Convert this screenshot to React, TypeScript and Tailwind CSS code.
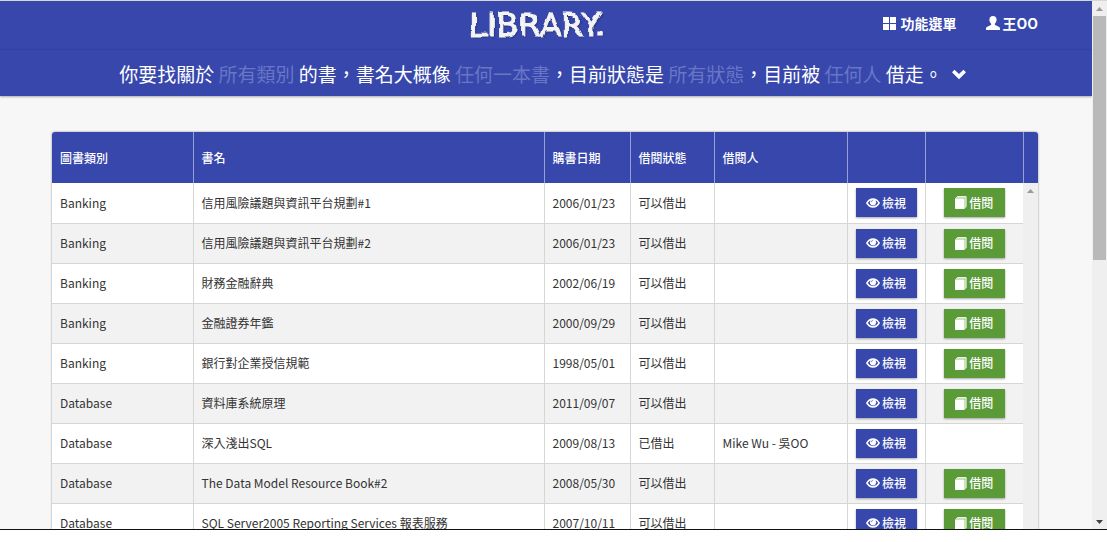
import type { ReactNode } from "react";

type Book = {
  category: string;
  title: string;
  date: string;
  status: string;
  borrower?: string;
};

const books: Book[] = [
  { category: "Banking", title: "信用風險議題與資訊平台規劃#1", date: "2006/01/23", status: "可以借出" },
  { category: "Banking", title: "信用風險議題與資訊平台規劃#2", date: "2006/01/23", status: "可以借出" },
  { category: "Banking", title: "財務金融辭典", date: "2002/06/19", status: "可以借出" },
  { category: "Banking", title: "金融證券年鑑", date: "2000/09/29", status: "可以借出" },
  { category: "Banking", title: "銀行對企業授信規範", date: "1998/05/01", status: "可以借出" },
  { category: "Database", title: "資料庫系統原理", date: "2011/09/07", status: "可以借出" },
  { category: "Database", title: "深入淺出SQL", date: "2009/08/13", status: "已借出", borrower: "Mike Wu - 吳OO" },
  { category: "Database", title: "The Data Model Resource Book#2", date: "2008/05/30", status: "可以借出" },
  { category: "Database", title: "SQL Server2005 Reporting Services 報表服務", date: "2007/10/11", status: "可以借出" },
];

const headings = ["圖書類別", "書名", "購書日期", "借閱狀態", "借閱人", "", "", ""];

function ChalkFilter() {
  return (
    <svg width="0" height="0" className="absolute" aria-hidden="true">
      <filter id="chalk" x="-5%" y="-10%" width="110%" height="120%">
        <feTurbulence type="fractalNoise" baseFrequency="0.07" numOctaves="2" seed="7" result="noise" />
        <feDisplacementMap in="SourceGraphic" in2="noise" scale="5" xChannelSelector="R" yChannelSelector="G" />
      </filter>
    </svg>
  );
}

function GridIcon() {
  return (
    <svg viewBox="0 0 13 13" className="size-[13px]" fill="currentColor" aria-hidden="true">
      <path d="M0 0h6v6H0zM7 0h6v6H7zM0 7h6v6H0zM7 7h6v6H7z" />
    </svg>
  );
}

function UserIcon() {
  return (
    <svg viewBox="0 0 14 14" className="size-[14px]" fill="currentColor" aria-hidden="true">
      <path d="M7 0C4.700 0 3.400 1.500 3.400 3.600c0 1.600.6 3.200 1.700 4.200.3.500.2 1-.3 1.300L1.300 10.700C.5 11.100 0 11.700 0 12.500V14h14v-1.500c0-.8-.5-1.400-1.300-1.800L9.200 9.100c-.5-.3-.6-.8-.3-1.300 1.100-1 1.700-2.600 1.700-4.200C10.600 1.500 9.300 0 7 0z" />
    </svg>
  );
}

function ChevronIcon() {
  return (
    <svg viewBox="0 0 16 12" className="h-3 w-4" fill="currentColor" aria-hidden="true">
      <path d="M1 4.300 3.600 1.700 8 6l4.400-4.300L15 4.300 8 11.200z" />
    </svg>
  );
}

function EyeIcon() {
  return (
    <svg viewBox="0 0 14 12" className="h-3 w-[14px]" fill="none" stroke="currentColor" aria-hidden="true">
      <path d="M.9 6C2.300 3.600 4.400 2 7 2s4.700 1.600 6.100 4C11.700 8.400 9.600 9.900 7 9.900S2.300 8.400.9 6z" strokeWidth="1.500" />
      <circle cx="7" cy="5.300" r="3.100" fill="currentColor" stroke="none" />
      <path d="M5.300 5.100c0-.9.600-1.500 1.500-1.500" stroke="#3747ac" strokeWidth=".8" />
    </svg>
  );
}

function BookIcon() {
  return (
    <svg viewBox="0 0 12 13" className="h-[13px] w-3" aria-hidden="true">
      <path d="M2.500.5h8.700c.4 0 .6.200.6.600v9.400L10 12.600V2.500H1z" fill="#cfe2b8" />
      <path d="M.7 2.500h8.500c.3 0 .5.200.5.500v9.500c0 .3-.2.500-.5.500H1c-.6 0-1-.4-1-1V3.100c0-.3.300-.6.700-.6z" fill="currentColor" />
      <path d="M.4 2.800 2.500.5h8.700" fill="none" stroke="currentColor" strokeWidth=".8" />
    </svg>
  );
}

function Arrow({ down = false, dark = false }: { down?: boolean; dark?: boolean }) {
  return (
    <svg viewBox="0 0 7 4" className={dark ? "h-1 w-[7px] text-[#404040]" : "h-1 w-[7px] text-[#9a9a9a]"} fill="currentColor" aria-hidden="true">
      <path d={down ? "M0 0h7L3.500 4z" : "M0 4h7L3.500 0z"} />
    </svg>
  );
}

function ActionButton({ green = false, children }: { green?: boolean; children: ReactNode }) {
  const tone = green ? "bg-[#5a9b38]" : "bg-[#3747ac]";
  return (
    <button
      type="button"
      className={`${tone} mx-auto flex h-[29px] w-[61px] items-center justify-center gap-0.5 text-xs font-medium text-white shadow-[0_1px_2px_rgba(0,0,0,0.35)]`}
    >
      {children}
    </button>
  );
}

function Filter({ children }: { children: ReactNode }) {
  return (
    <a href="#filter" className="text-[#6976c6]">
      {children}
    </a>
  );
}

export default function App() {
  return (
    <div className="flex h-screen flex-col bg-white pb-3 font-['Noto_Sans_CJK_TC','Noto_Sans',sans-serif] text-[#333]">
      <ChalkFilter />
      <div className="flex min-h-0 flex-1 border-t border-b border-t-[#d5d6dc] border-b-[#111]">
        <div className="flex min-w-0 flex-1 flex-col overflow-hidden bg-[#f7f7f7]">
          <header className="shrink-0 bg-[#3747ac] text-white shadow-[0_1px_2px_rgba(0,0,0,0.3)]">
            <div className="grid h-[49px] grid-cols-[1fr_auto_1fr] items-center border-b border-[#3041a0] pr-[54px] pb-1 pl-[36px]">
              <span />
              <h1 className="pt-1 font-['DejaVu_Sans',sans-serif] text-[32px] leading-none text-[#f4f4f4] [-webkit-text-stroke:1px_#f4f4f4] [filter:url(#chalk)] [text-shadow:1px_1px_2px_rgba(0,0,0,0.4)]">
                LIBRARY.
              </h1>
              <nav className="flex justify-end gap-[30px] text-sm font-bold">
                <a href="#menu" className="flex items-center gap-1">
                  <GridIcon />
                  功能選單
                </a>
                <a href="#user" className="flex items-center gap-0.5">
                  <UserIcon />
                  王OO
                </a>
              </nav>
            </div>
            <div className="flex h-[46px] items-center justify-center gap-2 pt-0.5 pr-[6px] text-[19px]">
              <p className="whitespace-nowrap">
                你要找關於 <Filter>所有類別</Filter> 的書，書名大概像 <Filter>任何一本書</Filter>，目前狀態是 <Filter>所有狀態</Filter>，目前被 <Filter>任何人</Filter> 借走。
              </p>
              <button type="button" aria-label="展開">
                <ChevronIcon />
              </button>
            </div>
          </header>

          <main className="min-h-0 flex-1 overflow-hidden pt-9 pr-[54px] pl-[52px]">
            <div className="overflow-hidden rounded-t-[3px] bg-white shadow-[0_0_2px_rgba(0,0,0,0.5)]">
              <table className="w-full table-fixed border-collapse text-xs">
                <colgroup>
                  <col className="w-[141px]" />
                  <col />
                  <col className="w-[86px]" />
                  <col className="w-[84px]" />
                  <col className="w-[133px]" />
                  <col className="w-[78px]" />
                  <col className="w-[98px]" />
                  <col className="w-[15px]" />
                </colgroup>
                <thead>
                  <tr className="h-[51px] bg-[#3747ac] text-left text-white">
                    {headings.map((heading, i) => (
                      <th key={i} className="border-l border-[#97a0d5] px-2 font-medium first:border-l-0 last:p-0">
                        {heading}
                      </th>
                    ))}
                  </tr>
                </thead>
                <tbody>
                  {books.map((book, i) => (
                    <tr key={i} className="h-10 odd:bg-white even:bg-[#f2f2f2]">
                      <td className="border-b border-[#d6d6d6] px-2">{book.category}</td>
                      <td className="border-b border-l border-[#d6d6d6] px-2">{book.title}</td>
                      <td className="border-b border-l border-[#d6d6d6] px-2">{book.date}</td>
                      <td className="border-b border-l border-[#d6d6d6] px-2">{book.status}</td>
                      <td className="border-b border-l border-[#d6d6d6] px-2">{book.borrower}</td>
                      <td className="border-b border-l border-[#d6d6d6] p-0">
                        <ActionButton>
                          <EyeIcon />
                          檢視
                        </ActionButton>
                      </td>
                      <td className="border-b border-l border-[#d6d6d6] p-0">
                        {!book.borrower && (
                          <ActionButton green>
                            <BookIcon />
                            借閱
                          </ActionButton>
                        )}
                      </td>
                      {i === 0 && (
                        <td rowSpan={books.length} className="bg-[#efefef] p-0 pt-[6px] align-top">
                          <div className="flex justify-center">
                            <Arrow />
                          </div>
                        </td>
                      )}
                    </tr>
                  ))}
                </tbody>
              </table>
            </div>
          </main>
        </div>

        <div className="flex w-[15px] shrink-0 flex-col items-center bg-[#efefef]">
          <div className="flex h-[15px] items-center">
            <Arrow />
          </div>
          <div className="flex w-full flex-1 flex-col px-px">
            <div className="h-[49%] bg-[#b9b9b9]" />
          </div>
          <div className="flex h-[15px] items-center">
            <Arrow down dark />
          </div>
        </div>
      </div>
    </div>
  );
}
